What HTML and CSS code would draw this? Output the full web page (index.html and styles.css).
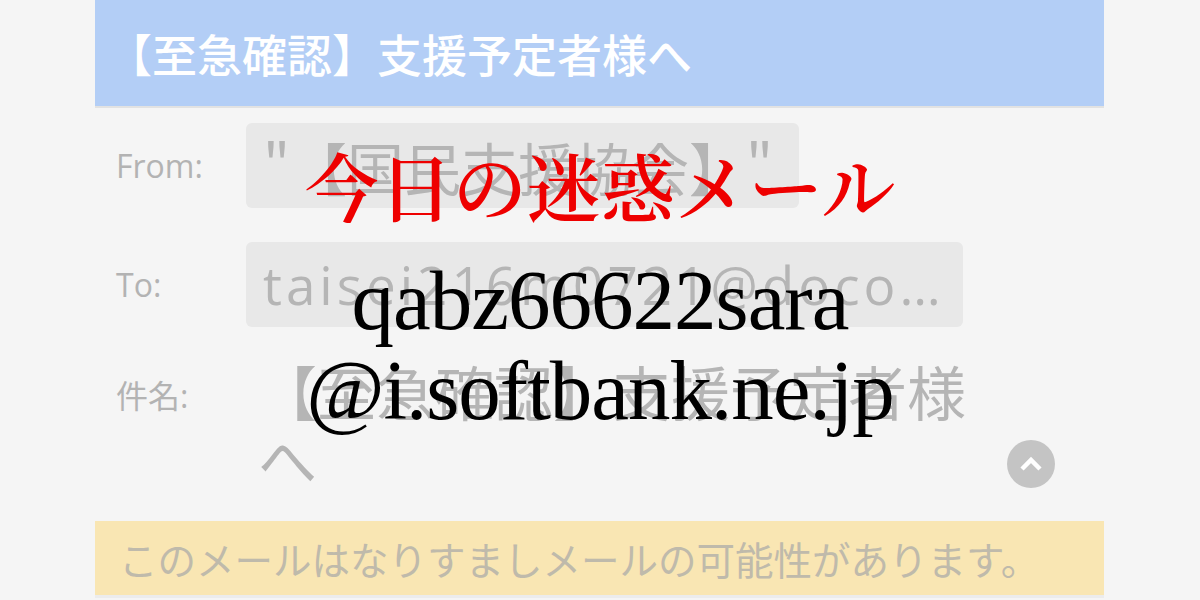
FILE: index.html
```html
<!DOCTYPE html>
<html lang="ja">
<head>
    <meta charset="utf-8">
    <title>今日の迷惑メール</title>
    <link rel="stylesheet" href="styles.css">
</head>
<body>
    <div class="mail">
        <div class="mail-head">
            <h1>【至急確認】支援予定者様へ</h1>
        </div>

        <div class="fields">
            <div class="row">
                <span class="label">From:</span>
                <div class="field from">"【国民支援協会】"</div>
            </div>
            <div class="row">
                <span class="label">To:</span>
                <div class="field to">taisei216m0721@doco…</div>
            </div>
            <div class="row subject-row">
                <span class="label">件名:</span>
                <div class="subject">【至急確認】支援予定者様<br>へ</div>
                <span class="collapse">
                    <svg width="48" height="48" viewBox="0 0 48 48">
                        <circle cx="24" cy="24" r="24" fill="#c4c4c4"/>
                        <path d="M15 29 L24 20 L33 29" fill="none" stroke="#fff" stroke-width="4.5" stroke-linejoin="miter"/>
                    </svg>
                </span>
            </div>
        </div>

        <div class="warning">このメールはなりすましメールの可能性があります。</div>
    </div>

    <!-- caption laid over the screenshot -->
    <div class="caption">
        <p class="caption-title">今日の迷惑メール</p>
        <p class="caption-address">qabz66622sara<br>@i.softbank.ne.jp</p>
    </div>
</body>
</html>
```

FILE: styles.css
```css
body {
    margin: 0;
    width: 1200px;
    height: 600px;
    overflow: hidden;
    background-color: #f5f5f5;
    font-family: "Open Sans", "Noto Sans CJK JP", sans-serif;
    position: relative;
}

.mail {
    width: 1009px;
    margin-left: 95px;
}

.mail-head {
    height: 106px;
    background-color: #b3cef6;
    border-bottom: 2px solid #e2e2e2;
    display: flex;
    align-items: center;
    padding-left: 12px;
}

.mail-head h1 {
    margin: 0;
    color: #fff;
    font-family: "Noto Sans CJK JP", sans-serif;
    font-size: 45px;
    font-weight: 500;
}

.fields {
    padding: 15px 0 0 21px;
    height: 413px;
    box-sizing: border-box;
}

.row {
    display: flex;
    align-items: center;
    margin-bottom: 34px;
}

.label {
    width: 130px;
    flex-shrink: 0;
    color: #b3b3b3;
    font-family: "Open Sans", "Noto Sans CJK JP", sans-serif;
    font-size: 32px;
}

.field {
    height: 85px;
    border-radius: 6px;
    background-color: #e8e8e8;
    color: #b5b5b5;
    box-sizing: border-box;
    display: flex;
    align-items: center;
    padding-left: 17px;
    white-space: nowrap;
    overflow: hidden;
}

.field.from {
    width: 553px;
    font-family: "Noto Sans CJK JP", sans-serif;
    font-size: 57px;
}

.field.to {
    width: 717px;
    font-size: 53px;
    letter-spacing: 4px;
}

.subject-row {
    align-items: flex-start;
    position: relative;
}

.subject-row .label {
    line-height: 69px;
}

.subject {
    color: #b5b5b5;
    font-family: "Noto Sans CJK JP", sans-serif;
    font-size: 59px;
    line-height: 67px;
    margin: -4px 0 0 12px;
}

.collapse {
    position: absolute;
    right: 49px;
    top: 79px;
    display: flex;
}

.warning {
    height: 74px;
    background-color: #f9e6b3;
    border-bottom: 3px solid #ececec;
    color: #bfbaab;
    font-family: "Noto Sans CJK JP", sans-serif;
    font-size: 38.5px;
    display: flex;
    align-items: center;
    padding-left: 24px;
}

.caption {
    position: absolute;
    left: 0;
    top: 138px;
    width: 1200px;
    text-align: center;
}

.caption p {
    margin: 0;
}

.caption-title {
    color: #ee0000;
    font-family: "Noto Serif CJK JP", "Noto Sans CJK JP", serif;
    font-size: 74px;
    font-weight: 600;
    line-height: 92px;
}

.caption-address {
    padding-top: 25px;
    color: #000;
    font-family: "Liberation Serif", serif;
    font-size: 85px;
    line-height: 90px;
    letter-spacing: -1px;
}
```
